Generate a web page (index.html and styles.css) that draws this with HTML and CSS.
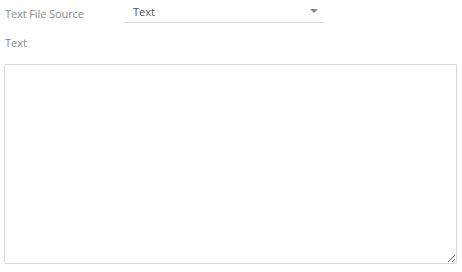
FILE: index.html
```html
<!DOCTYPE html>
<html lang="en">
<head>
    <meta charset="UTF-8">
    <meta name="viewport" content="width=device-width, initial-scale=1.0">
    <title>Text File Source</title>
    <link rel="stylesheet" href="styles.css">
</head>
<body>
    <div class="row">
        <label class="label source-label">Text File Source</label>
        <div class="select">
            <span class="select-value">Text</span>
            <span class="caret"></span>
        </div>
    </div>
    <div class="label text-label">Text</div>
    <textarea class="text-input"></textarea>
</body>
</html>
```

FILE: styles.css
```css
body {
    margin: 0;
    padding: 0 5px 0 4px;
    font-family: "Open Sans", Arial, sans-serif;
    font-size: 11px;
    background: #fff;
}
.row {
    display: flex;
    align-items: flex-start;
    height: 23px;
}
.label {
    color: #8a8a8a;
    padding-left: 1px;
}
.source-label {
    width: 119px;
    padding-top: 6px;
    letter-spacing: -0.1px;
}
.select {
    display: flex;
    align-items: center;
    justify-content: space-between;
    width: 200px;
    height: 23px;
    border-bottom: 1px solid #d9d9d9;
    box-sizing: border-box;
    padding: 0 6px 0 9px;
}
.select-value {
    color: #555;
}
.caret {
    width: 0;
    height: 0;
    border-left: 4px solid transparent;
    border-right: 4px solid transparent;
    border-top: 4px solid #888;
    margin-top: -1px;
}
.text-label {
    margin-top: 12px;
    height: 29px;
}
.text-input {
    display: block;
    width: 453px;
    height: 200px;
    box-sizing: border-box;
    border: 1px solid #d9d9d9;
    border-radius: 2px;
    resize: vertical;
    margin: 0;
    outline: none;
}
```
